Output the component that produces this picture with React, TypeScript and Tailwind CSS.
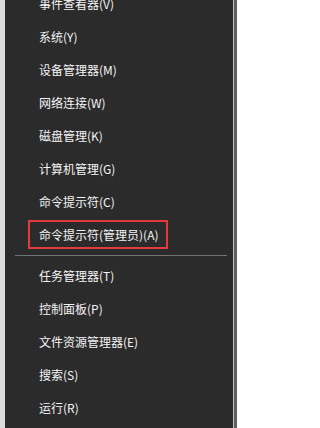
const topItems = [
  "事件查看器(V)",
  "系统(Y)",
  "设备管理器(M)",
  "网络连接(W)",
  "磁盘管理(K)",
  "计算机管理(G)",
  "命令提示符(C)",
]

const bottomItems = [
  "任务管理器(T)",
  "控制面板(P)",
  "文件资源管理器(E)",
  "搜索(S)",
  "运行(R)",
]

export default function App() {
  return (
    <div
      className="flex w-[237px] h-[428px] overflow-hidden bg-[#2b2b2b]"
      style={{ fontFamily: '"Microsoft YaHei", "Noto Sans CJK SC", sans-serif' }}
    >
      <div className="w-[5px] bg-[#dcdcdc]" />
      <div className="flex-1 flex flex-col text-[12px] text-[#f4f4f4]">
        <ul className="-mt-[13px] flex flex-col">
          {topItems.map((item) => (
            <li key={item} className="h-[33px] flex items-center pl-[34px]">
              {item}
            </li>
          ))}
          <li className="h-[33px] flex items-center pl-[23px]">
            <span className="h-[29px] flex items-center border-2 border-[#e23b3b] pl-[9px] pr-[7px]">
              命令提示符(管理员)(A)
            </span>
          </li>
        </ul>

        <div className="h-[8px] flex items-center pl-[10px] pr-[6px]">
          <div className="h-px w-full bg-[#727272]" />
        </div>

        <ul className="flex flex-col">
          {bottomItems.map((item) => (
            <li key={item} className="h-[33px] flex items-center pl-[34px]">
              {item}
            </li>
          ))}
        </ul>
      </div>
      <div className="w-px bg-[#c4c4c4]" />
      <div className="w-[3px] bg-[#5f5f5f]" />
    </div>
  )
}
